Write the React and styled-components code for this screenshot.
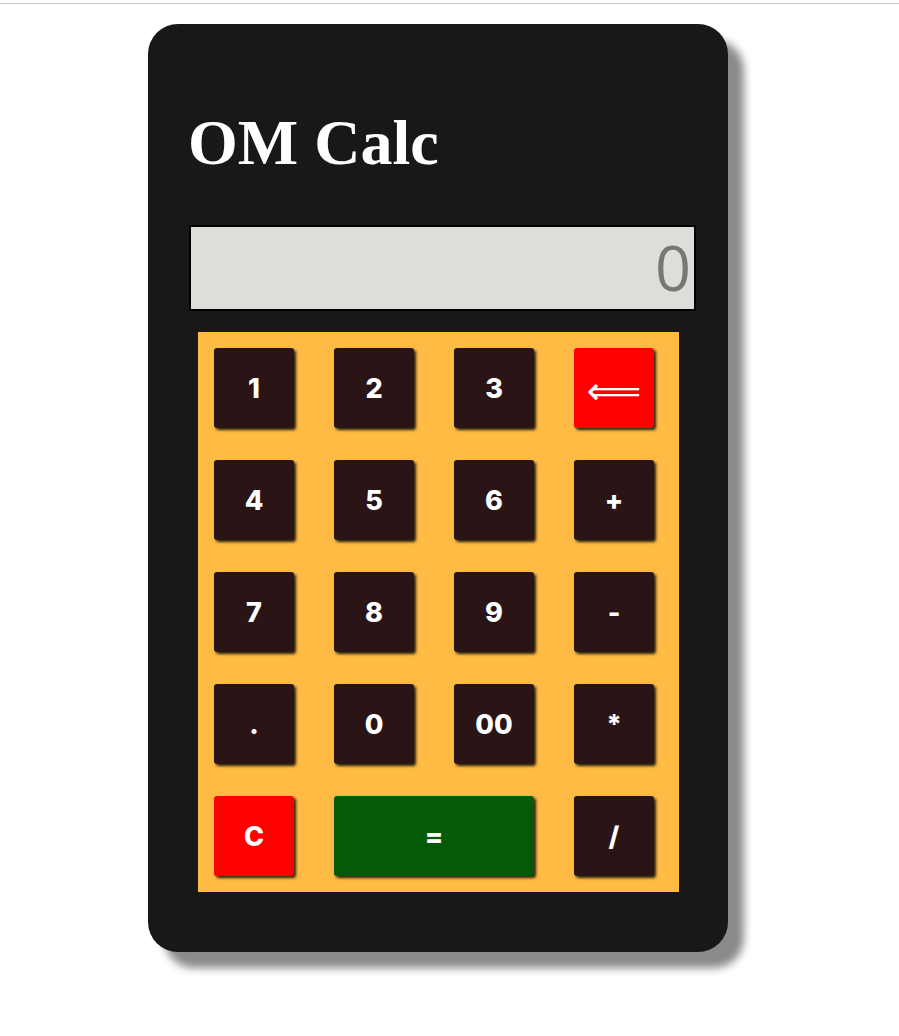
import React, { useState } from "react";
import styled, { createGlobalStyle } from "styled-components";

const GlobalStyle = createGlobalStyle`
  body {
    margin: 0;
    background: #ffffff;
    font-family: "Liberation Sans", Arial, sans-serif;
  }
`;

const KEYS = [
  { label: "1" },
  { label: "2" },
  { label: "3" },
  { label: "⟸", kind: "danger", arrow: true },
  { label: "4" },
  { label: "5" },
  { label: "6" },
  { label: "+" },
  { label: "7" },
  { label: "8" },
  { label: "9" },
  { label: "-" },
  { label: "." },
  { label: "0" },
  { label: "00" },
  { label: "*" },
  { label: "C", kind: "danger" },
  { label: "=", kind: "equals", wide: true },
  { label: "/" },
];

const App = () => {
  const [value, setValue] = useState("0");

  const press = (key) => {
    if (key === "C") return setValue("0");
    if (key === "⟸") return setValue((v) => (v.length > 1 ? v.slice(0, -1) : "0"));
    if (key === "=") {
      try {
        // eslint-disable-next-line no-new-func
        const result = Function(`return (${value})`)();
        setValue(String(result));
      } catch (e) {
        setValue("0");
      }
      return;
    }
    setValue((v) => (v === "0" && key !== "." ? key : v + key));
  };

  return (
    <>
      <GlobalStyle />
      <TopRule />
      <Page>
        <Card>
          <Title>OM Calc</Title>
          <Display>{value}</Display>
          <Keypad>
            {KEYS.map((key) => (
              <Key
                key={key.label}
                $kind={key.kind}
                $wide={key.wide}
                $arrow={key.arrow}
                onClick={() => press(key.label)}
              >
                {key.label}
              </Key>
            ))}
          </Keypad>
        </Card>
      </Page>
    </>
  );
};

const TopRule = styled.div`
  height: 1px;
  margin-top: 3px;
  background: #cacaca;
`;

const Page = styled.div`
  padding: 20px 0 60px 148px;
`;

const Card = styled.div`
  box-sizing: border-box;
  width: 580px;
  height: 928px;
  padding: 87px 32px 0 40px;
  background: #181818;
  border-radius: 30px;
  box-shadow: 16px 16px 9px #8a8a8a;
`;

const Title = styled.h1`
  margin: 0;
  font-family: "Liberation Serif", "Times New Roman", serif;
  font-size: 64px;
  line-height: 64px;
  font-weight: bold;
  color: #ffffff;
`;

const Display = styled.div`
  box-sizing: border-box;
  width: 507px;
  height: 86px;
  margin: 50px 0 0 1px;
  padding: 0 3px 0 0;
  border: 2px solid #000000;
  background: #dcdfd9;
  color: #767873;
  font-family: "Open Sans", "Liberation Sans", sans-serif;
  font-size: 63px;
  line-height: 79px;
  text-align: right;
  overflow: hidden;
`;

const Keypad = styled.div`
  box-sizing: border-box;
  width: 481px;
  margin: 21px 0 0 10px;
  padding: 16px 25px 16px 16px;
  display: grid;
  grid-template-columns: repeat(4, 80px);
  grid-auto-rows: 80px;
  column-gap: 40px;
  row-gap: 32px;
  background: #ffbb44;
`;

const keyColors = {
  danger: "#ff0000",
  equals: "#055a07",
};

const Key = styled.button`
  grid-column: ${(p) => (p.$wide ? "span 2" : "auto")};
  display: flex;
  align-items: center;
  justify-content: center;
  padding: ${(p) => (p.$arrow ? "6px 0 0" : "0")};
  border: none;
  border-radius: 3px;
  background: ${(p) => keyColors[p.$kind] || "#2a1416"};
  box-shadow: 2px 2px 3px rgba(0, 0, 0, 0.85);
  color: #ffffff;
  font-family: ${(p) =>
    p.$arrow ? '"DejaVu Sans", sans-serif' : 'Inter, "Liberation Sans", sans-serif'};
  font-size: ${(p) => (p.$arrow ? "38px" : "27px")};
  font-weight: ${(p) => (p.$arrow ? 400 : 800)};
  line-height: 1;
  cursor: pointer;
`;

export default App;
